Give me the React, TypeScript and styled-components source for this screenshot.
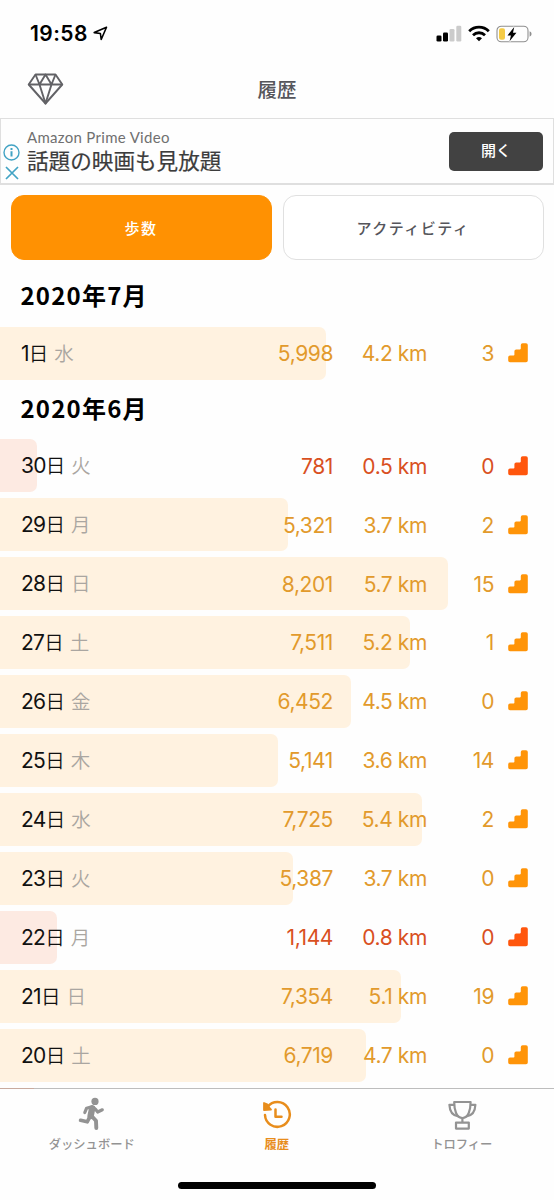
import React from 'react';
import styled, { createGlobalStyle } from 'styled-components';

const Global = createGlobalStyle`
  * { box-sizing: border-box; }
  body { margin: 0; background: #fff; }
`;

const JP = `'Noto Sans CJK JP', sans-serif`;
const UI = `Inter, 'Noto Sans CJK JP', sans-serif`;

const Screen = styled.div`
  width: 554px;
  height: 1200px;
  display: flex;
  flex-direction: column;
  overflow: hidden;
  background: #fefefe;
  font-family: ${UI};
  white-space: nowrap;
`;

const StatusBar = styled.div`
  height: 60px;
  flex: none;
  display: flex;
  align-items: center;
  justify-content: space-between;
  padding: 7px 22px 0 30px;
`;

const Clock = styled.div`
  display: flex;
  align-items: center;
  gap: 5px;
  font-size: 21px;
  line-height: 26px;
  font-weight: 600;
  letter-spacing: 0.45px;
  color: #000;
`;

const StatusIcons = styled.div`
  display: flex;
  align-items: center;
  gap: 6px;
`;

const Header = styled.header`
  height: 58px;
  flex: none;
  display: grid;
  grid-template-columns: 1fr auto 1fr;
  align-items: center;
  padding: 0 27px;
`;

const HeaderTitle = styled.h1`
  margin: 0;
  font: 500 19.5px/30px ${JP};
  color: #55555b;
`;

const Ad = styled.section`
  height: 67px;
  flex: none;
  display: flex;
  align-items: center;
  border: 1px solid #dfdfdf;
  border-width: 1px 1px 2px 1px;
  padding-right: 10px;
`;

const AdChoices = styled.div`
  width: 21px;
  display: flex;
  flex-direction: column;
  align-items: center;
  gap: 5px;
  padding-top: 22px;
`;

const AdCopy = styled.div`
  flex: 1;
  padding-left: 5px;
`;

const AdBrand = styled.div`
  font: 400 15px/18px Lato, sans-serif;
  letter-spacing: 0.3px;
  color: #707070;
`;

const AdHeadline = styled.div`
  font: 400 21.6px/28px ${JP};
  -webkit-text-stroke: 0.2px currentColor;
  color: #3c3c3c;
`;

const AdButton = styled.button`
  width: 94px;
  height: 39px;
  padding: 0 0 2px;
  border: 0;
  border-radius: 5px;
  background: #424242;
  color: #fff;
  font: 500 15px/36px ${JP};
`;

const Segments = styled.div`
  height: 85px;
  flex: none;
  display: grid;
  grid-template-columns: 261px 261px;
  gap: 11px;
  padding: 10px 10.5px 10px;
`;

const Segment = styled.button<{ $active?: boolean }>`
  height: 65px;
  padding: 0;
  border-radius: 13px;
  border: 1.5px solid ${p => (p.$active ? '#ff9102' : '#e0e0e0')};
  background: ${p => (p.$active ? '#ff9102' : '#fff')};
  color: ${p => (p.$active ? '#fff' : '#55555b')};
  font: 500 15px/24px ${JP};
  letter-spacing: 1.5px;
`;

const History = styled.main`
  flex: 1;
  min-height: 0;
  overflow: hidden;
`;

const Month = styled.h2`
  margin: 0;
  height: 53.6px;
  padding: 0 20.5px;
  font: 700 24px/50px ${JP};
  letter-spacing: 1.2px;
  color: #000;
`;

const Row = styled.div<{ $low?: boolean }>`
  height: 58.95px;
  padding: 3px 0;
  color: ${p => (p.$low ? '#d9501f' : '#e29a2c')};
`;

const RowFill = styled.div<{ $low?: boolean }>`
  height: 53px;
  border-radius: 0 7px 7px 0;
  background: ${p => (p.$low ? '#fdeae2' : '#fff2e0')};
`;

const RowContent = styled.div`
  width: 554px;
  height: 53px;
  display: grid;
  grid-template-columns: 190px 122px 94px 67px 34px;
  align-items: center;
  padding-left: 21px;
  font-size: 21px;
`;

const Day = styled.div`
  display: flex;
  align-items: baseline;
  line-height: 30px;
  letter-spacing: -0.7px;
  color: #111;
`;

const Weekday = styled.span`
  margin-left: 6px;
  font: 350 19.5px/30px ${JP};
  letter-spacing: 0;
  color: #aaa6a1;
`;

const DayUnit = styled.span`
  font: 350 19.5px/30px ${JP};
  letter-spacing: 0;
`;

const Value = styled.div`
  text-align: right;
  padding-top: 2px;
  line-height: 30px;
  letter-spacing: -0.4px;
`;

const StairsSvg = styled.svg<{ $low?: boolean }>`
  justify-self: end;
  color: ${p => (p.$low ? '#ff560d' : '#ff9408')};
`;

const TabBar = styled.nav`
  height: 112px;
  flex: none;
  position: relative;
  display: grid;
  grid-template-columns: repeat(3, 185px);
  align-items: start;
  border-top: 1px solid #bdbdbd;
  background: #fefefe;
`;

const Tab = styled.div<{ $active?: boolean }>`
  display: flex;
  flex-direction: column;
  align-items: center;
  padding: 8px 1.5px 0 0;
  color: ${p => (p.$active ? '#e88d1c' : '#939393')};
  font: ${p => (p.$active ? 700 : 500)} 12.3px/20px ${JP};
  svg { margin-bottom: 3px; }
`;

const DividerTint = styled.div`
  position: absolute;
  left: 0;
  top: -1px;
  width: 34px;
  height: 1px;
  background: #c9ab9f;
`;

const HomeIndicator = styled.div`
  position: absolute;
  left: 178px;
  bottom: 11px;
  width: 198px;
  height: 7px;
  border-radius: 4px;
  background: #000;
`;

const Stairs = ({ low }: { low?: boolean }) => (
  <StairsSvg $low={low} width="20" height="20" viewBox="0 0 20 20">
    <path
      d="M2 12.6h3.6q.8 0 .8-.8V8.2q0-1.8 1.8-1.8h3.8q.8 0 .8-.8V2q0-1.8 1.8-1.8h3.4q1.8 0 1.8 1.8v15.4q0 1.8-1.8 1.8H2q-1.8 0-1.8-1.8v-3.2q0-1.6 1.8-1.6z"
      fill="currentColor"
    />
  </StairsSvg>
);

type Entry = { day: number; week: string; steps: string; km: string; floors: number; bar: number; low?: boolean };

const july: Entry[] = [{ day: 1, week: '水', steps: '5,998', km: '4.2', floors: 3, bar: 326 }];

const june: Entry[] = [
  { day: 30, week: '火', steps: '781', km: '0.5', floors: 0, bar: 37, low: true },
  { day: 29, week: '月', steps: '5,321', km: '3.7', floors: 2, bar: 288 },
  { day: 28, week: '日', steps: '8,201', km: '5.7', floors: 15, bar: 448 },
  { day: 27, week: '土', steps: '7,511', km: '5.2', floors: 1, bar: 410 },
  { day: 26, week: '金', steps: '6,452', km: '4.5', floors: 0, bar: 351 },
  { day: 25, week: '木', steps: '5,141', km: '3.6', floors: 14, bar: 278 },
  { day: 24, week: '水', steps: '7,725', km: '5.4', floors: 2, bar: 422 },
  { day: 23, week: '火', steps: '5,387', km: '3.7', floors: 0, bar: 293 },
  { day: 22, week: '月', steps: '1,144', km: '0.8', floors: 0, bar: 57, low: true },
  { day: 21, week: '日', steps: '7,354', km: '5.1', floors: 19, bar: 401 },
  { day: 20, week: '土', steps: '6,719', km: '4.7', floors: 0, bar: 366 },
];

const DayRow = ({ e }: { e: Entry }) => (
  <Row $low={e.low}>
    <RowFill $low={e.low} style={{ width: e.bar }}>
      <RowContent>
        <Day>
          {e.day}
          <DayUnit>日</DayUnit>
          <Weekday>{e.week}</Weekday>
        </Day>
        <Value>{e.steps}</Value>
        <Value>{e.km} km</Value>
        <Value>{e.floors}</Value>
        <Stairs low={e.low} />
      </RowContent>
    </RowFill>
  </Row>
);

export default function App() {
  return (
    <Screen>
      <Global />
      <StatusBar>
        <Clock>
          19:58
          <svg width="15" height="15" viewBox="0 0 15 15" fill="none" stroke="#000" strokeWidth="1.6" strokeLinejoin="round">
            <path d="M13.5 1.2L1.2 6.6l6.2.9.8 6z" />
          </svg>
        </Clock>
        <StatusIcons>
          <svg width="26" height="17" viewBox="0 0 26 17">
            <rect x="0.5" y="10.5" width="5" height="6" rx="1.3" />
            <rect x="7" y="7.5" width="5" height="9" rx="1.3" />
            <rect x="13.5" y="4" width="5" height="12.5" rx="1.3" fill="#cbcbcb" />
            <rect x="20.3" y="0.8" width="5" height="15.7" rx="1.3" fill="#cbcbcb" />
          </svg>
          <svg width="22" height="17" viewBox="0 0 22 17" fill="none" stroke="#000" strokeWidth="2.8">
            <path d="M1.2 6.2a14 14 0 0 1 19.6 0" />
            <path d="M5 10.2a8.6 8.6 0 0 1 12 0" />
            <path d="M8 13.3a4.4 4.4 0 0 1 6 0l-3 3z" fill="#000" stroke="none" />
          </svg>
          <svg width="36" height="18" viewBox="0 0 36 18">
            <rect x="1" y="1.2" width="31" height="15.6" rx="4.3" fill="none" stroke="#8f8f8f" strokeWidth="1.1" />
            <path d="M33.6 6.3v5.4q2-.8 2-2.7t-2-2.7z" fill="#8f8f8f" />
            <rect x="3" y="3.2" width="6" height="11.6" rx="2" fill="#f5cb45" />
            <path d="M19.2.8L11.4 10.5h4L13.8 17.2l8-9.7h-4z" fill="#000" stroke="#fefefe" strokeWidth="2.4" paintOrder="stroke" transform="translate(1.7 1.4) scale(.86)" />
          </svg>
        </StatusIcons>
      </StatusBar>

      <Header>
        <svg width="37" height="32" viewBox="0 0 37 32" fill="none" stroke="#626266" strokeWidth="1.9" strokeLinejoin="round">
          <path d="M8.5 1.5h20L35.3 11.5 18.5 30.5 1.7 11.5z" />
          <path d="M1.7 11.5h33.6M8.5 1.5l4 10 6-10 6 10 4-10M12.5 11.5l6 19 6-19" />
        </svg>
        <HeaderTitle>履歴</HeaderTitle>
      </Header>

      <Ad>
        <AdChoices>
          <svg width="17" height="17" viewBox="0 0 17 17" fill="none" stroke="#42a3c4" strokeWidth="1.4">
            <circle cx="8.5" cy="8.5" r="7.5" />
            <path d="M8.5 7.2v5.3M8.5 4v1.9" strokeWidth="2" />
          </svg>
          <svg width="14" height="14" viewBox="0 0 14 14" fill="none" stroke="#42a3c4" strokeWidth="1.7">
            <path d="M1 1l12 12M13 1L1 13" />
          </svg>
        </AdChoices>
        <AdCopy>
          <AdBrand>Amazon Prime Video</AdBrand>
          <AdHeadline>話題の映画も見放題</AdHeadline>
        </AdCopy>
        <AdButton>開く</AdButton>
      </Ad>

      <Segments>
        <Segment $active>歩数</Segment>
        <Segment>アクティビティ</Segment>
      </Segments>

      <History>
        <Month>2020年7月</Month>
        {july.map(e => <DayRow key={e.day} e={e} />)}
        <Month>2020年6月</Month>
        {june.map(e => <DayRow key={e.day} e={e} />)}
      </History>

      <TabBar>
        <DividerTint />
        <Tab>
          <svg width="27" height="34" viewBox="0 0 27 34" fill="none" stroke="currentColor" strokeLinecap="round" strokeLinejoin="round">
            <circle cx="17" cy="4.4" r="3.6" fill="currentColor" stroke="none" />
            <path d="M6.8 15.5l1.8-4.3 5.2-1.5 3.5 2.3 2.4 3 4.6-2.2" strokeWidth="3.2" />
            <path d="M14.2 11.4L12.6 19" strokeWidth="6.4" />
            <path d="M12 19.5l-2.8 5.3-6.6-1.5" strokeWidth="3.7" />
            <path d="M13.8 19.2l4.2 4.6.3 7.2" strokeWidth="3.9" />
          </svg>
          ダッシュボード
        </Tab>
        <Tab $active>
          <svg width="30" height="34" viewBox="0 0 30 34" fill="none" stroke="currentColor" strokeWidth="2.5" strokeLinecap="round" strokeLinejoin="round">
            <path d="M5.6 9.8A12.4 12.4 0 1 1 3 18" />
            <path d="M2 6v7l7-.5-2-2.2-1.8-3z" fill="currentColor" strokeWidth="1.8" />
            <path d="M13.5 12.5v7.3h6" />
          </svg>
          履歴
        </Tab>
        <Tab>
          <svg width="30" height="34" viewBox="0 0 30 34" fill="none" stroke="currentColor" strokeWidth="2.2" strokeLinejoin="round">
            <path d="M7.2 5h16.4c0 8-2.2 16-8.2 16S7.2 13 7.2 5z" />
            <path d="M7.2 7.8H2.4c.3 6.6 3.2 11 9 11.6M23.6 7.8h4.8c-.3 6.6-3.2 11-9 11.6M15.4 21v4.6" />
            <path d="M9 25.6h12.8v6H9z" />
          </svg>
          トロフィー
        </Tab>
        <HomeIndicator />
      </TabBar>
    </Screen>
  );
}
